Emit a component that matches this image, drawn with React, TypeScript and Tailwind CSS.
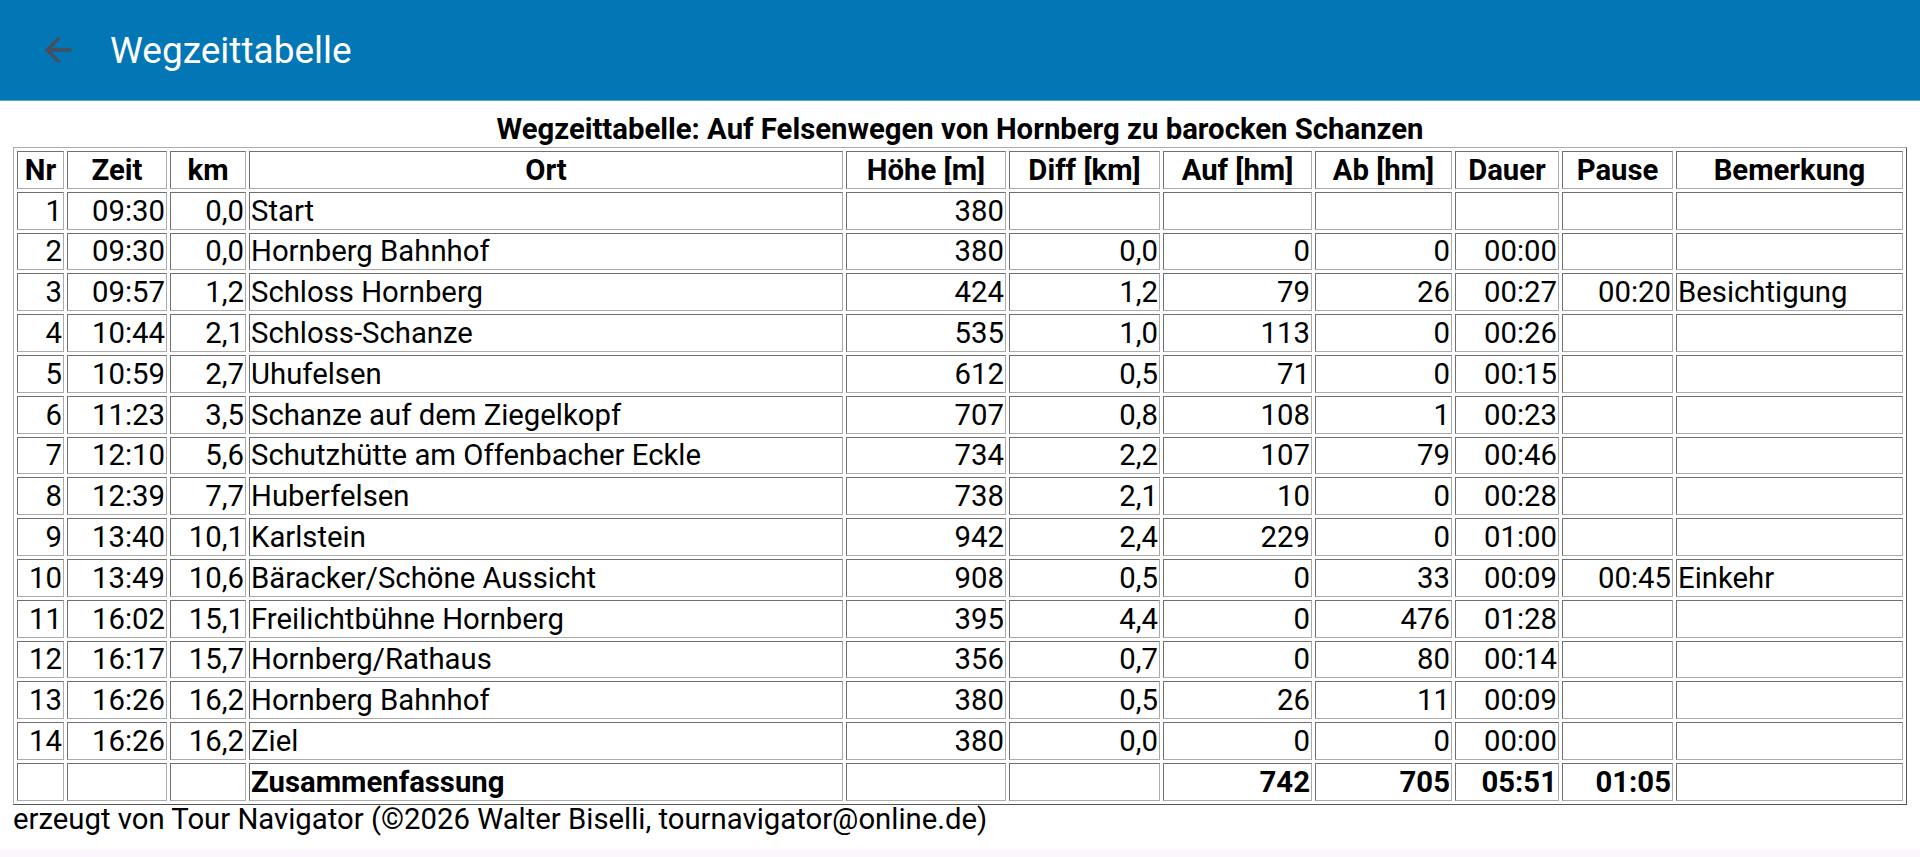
import React from "react";

type Row = [string, string, string, string, string, string, string, string, string, string, string];

const ROWS: Row[] = [
  ["1", "09:30", "0,0", "Start", "380", "", "", "", "", "", ""],
  ["2", "09:30", "0,0", "Hornberg Bahnhof", "380", "0,0", "0", "0", "00:00", "", ""],
  ["3", "09:57", "1,2", "Schloss Hornberg", "424", "1,2", "79", "26", "00:27", "00:20", "Besichtigung"],
  ["4", "10:44", "2,1", "Schloss-Schanze", "535", "1,0", "113", "0", "00:26", "", ""],
  ["5", "10:59", "2,7", "Uhufelsen", "612", "0,5", "71", "0", "00:15", "", ""],
  ["6", "11:23", "3,5", "Schanze auf dem Ziegelkopf", "707", "0,8", "108", "1", "00:23", "", ""],
  ["7", "12:10", "5,6", "Schutzhütte am Offenbacher Eckle", "734", "2,2", "107", "79", "00:46", "", ""],
  ["8", "12:39", "7,7", "Huberfelsen", "738", "2,1", "10", "0", "00:28", "", ""],
  ["9", "13:40", "10,1", "Karlstein", "942", "2,4", "229", "0", "01:00", "", ""],
  ["10", "13:49", "10,6", "Bäracker/Schöne Aussicht", "908", "0,5", "0", "33", "00:09", "00:45", "Einkehr"],
  ["11", "16:02", "15,1", "Freilichtbühne Hornberg", "395", "4,4", "0", "476", "01:28", "", ""],
  ["12", "16:17", "15,7", "Hornberg/Rathaus", "356", "0,7", "0", "80", "00:14", "", ""],
  ["13", "16:26", "16,2", "Hornberg Bahnhof", "380", "0,5", "26", "11", "00:09", "", ""],
  ["14", "16:26", "16,2", "Ziel", "380", "0,0", "0", "0", "00:00", "", ""],
];

const HEADERS = ["Nr", "Zeit", "km", "Ort", "Höhe [m]", "Diff [km]", "Auf [hm]", "Ab [hm]", "Dauer", "Pause", "Bemerkung"];
const WIDTHS = ["w-[47px]", "w-[100px]", "w-[76px]", "w-[594px]", "w-[160px]", "w-[151px]", "w-[149px]", "w-[137px]", "w-[104px]", "w-[111px]", "w-[227px]"];
// Ort und Bemerkung linksbündig, Rest rechts
const LEFT = [3, 10];

const cell =
  "h-[37.8px] px-px py-0 leading-[34px] whitespace-nowrap border border-t-[#6f6f6f] border-l-[#6f6f6f] border-b-[#ababab] border-r-[#ababab]";

export default function App() {
  return (
    <div className="h-screen flex flex-col bg-white text-black font-['Roboto','Liberation_Sans',sans-serif]">
      {/* App bar */}
      <div className="h-[101px] shrink-0 flex items-center bg-[#0376b5] border-b border-[#5d9fcc]">
        <svg viewBox="0 0 24 24" className="w-10 h-10 ml-[38px] fill-[#4a4d5a]">
          <path d="M20 11H7.83l5.59-5.59L12 4l-8 8 8 8 1.41-1.41L7.83 13H20v-2z" />
        </svg>
        <h1 className="ml-[32px] text-[37px] text-white leading-none">Wegzeittabelle</h1>
      </div>

      <div className="px-[13px] pt-[10px]">
        <div className="text-center font-bold text-[29.3px] leading-[36px]">
          Wegzeittabelle: Auf Felsenwegen von Hornberg zu barocken Schanzen
        </div>
        <table className="w-[1894px] table-fixed border-separate border-spacing-[3px] text-[29.3px] border border-t-[#ababab] border-l-[#ababab] border-b-[#555] border-r-[#555]">
          <thead>
            <tr>
              {HEADERS.map((h, i) => (
                <th key={h} className={`${cell} ${WIDTHS[i]} text-center font-bold`}>
                  {h}
                </th>
              ))}
            </tr>
          </thead>
          <tbody>
            {ROWS.map((r) => (
              <tr key={r[0]}>
                {r.map((v, i) => (
                  <td key={i} className={`${cell} ${LEFT.includes(i) ? "text-left" : "text-right"}`}>
                    {v}
                  </td>
                ))}
              </tr>
            ))}
            <tr className="font-bold">
              <td className={cell}></td>
              <td className={cell}></td>
              <td className={cell}></td>
              <td className={`${cell} text-left`}>Zusammenfassung</td>
              <td className={cell}></td>
              <td className={cell}></td>
              <td className={`${cell} text-right`}>742</td>
              <td className={`${cell} text-right`}>705</td>
              <td className={`${cell} text-right`}>05:51</td>
              <td className={`${cell} text-right`}>01:05</td>
              <td className={cell}></td>
            </tr>
          </tbody>
        </table>
      </div>
      <div className="px-[13px] text-[29.3px] leading-[28px]">
        erzeugt von Tour Navigator (©2026 Walter Biselli, tournavigator@online.de)
      </div>
      <div className="flex-1" />
      <div className="h-[7px] shrink-0 bg-[#fcf6fc]" />
    </div>
  );
}
